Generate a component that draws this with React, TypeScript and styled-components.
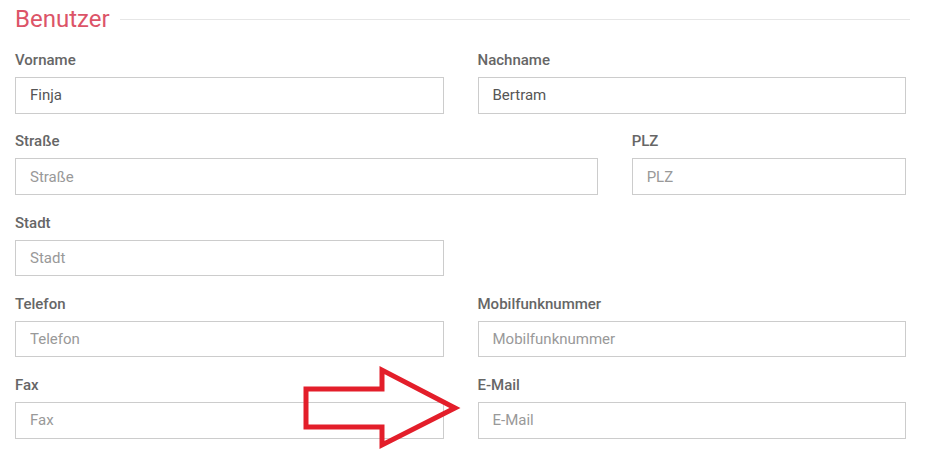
import React from "react";
import styled, { createGlobalStyle } from "styled-components";

const GlobalStyle = createGlobalStyle`
  html, body {
    margin: 0;
    padding: 0;
    background: #ffffff;
  }
  body {
    font-family: Roboto, "Liberation Sans", Arial, sans-serif;
  }
  * {
    box-sizing: border-box;
  }
`;

const Page = styled.div`
  position: relative;
  width: 927px;
  height: 463px;
  padding: 0 21px 0 15px;
  overflow: hidden;
`;

const TitleRow = styled.div`
  display: flex;
  align-items: center;
  gap: 10px;
  height: 38px;
  margin-bottom: 12px;
`;

const Title = styled.h2`
  margin: 0;
  font-weight: 400;
  font-size: 24px;
  line-height: 38px;
  color: #dc5468;
`;

const TitleLine = styled.div`
  flex: 1;
  height: 1px;
  background-color: #e6e6e6;
  margin-right: -4px;
`;

const FormGrid = styled.div`
  display: grid;
  grid-template-columns: repeat(12, 1fr);
  column-gap: 34px;
  row-gap: 17.75px;
`;

interface FieldProps {
  span: number;
}

const Field = styled.div<FieldProps>`
  grid-column: span ${(props) => props.span};
  display: flex;
  flex-direction: column;
`;

const Label = styled.label`
  font-weight: 500;
  font-size: 15px;
  line-height: 20px;
  color: #666666;
  margin-bottom: 7px;
`;

const Input = styled.input`
  height: 36.5px;
  width: 100%;
  padding: 0 14px;
  border: 1px solid #cccccc;
  border-radius: 0;
  background: #ffffff;
  font-family: inherit;
  font-size: 15px;
  color: #555555;
  outline: none;

  &::placeholder {
    color: #999999;
  }
`;

const Spacer = styled.div<FieldProps>`
  grid-column: span ${(props) => props.span};
`;

const ArrowOverlay = styled.svg`
  position: absolute;
  left: 0;
  top: 0;
  pointer-events: none;
`;

const fields = [
  { label: "Vorname", value: "Finja", span: 6 },
  { label: "Nachname", value: "Bertram", span: 6 },
  { label: "Straße", span: 8 },
  { label: "PLZ", span: 4 },
  { label: "Stadt", span: 6, gapAfter: 6 },
  { label: "Telefon", span: 6 },
  { label: "Mobilfunknummer", span: 6 },
  { label: "Fax", span: 6 },
  { label: "E-Mail", span: 6 },
];

const App: React.FC = () => {
  return (
    <Page>
      <GlobalStyle />
      <TitleRow>
        <Title>Benutzer</Title>
        <TitleLine />
      </TitleRow>

      <FormGrid>
        {fields.map((f) => (
          <React.Fragment key={f.label}>
            <Field span={f.span}>
              <Label>{f.label}</Label>
              <Input
                placeholder={f.label}
                defaultValue={f.value}
                readOnly
              />
            </Field>
            {f.gapAfter ? <Spacer span={f.gapAfter} /> : null}
          </React.Fragment>
        ))}
      </FormGrid>

      <ArrowOverlay width="927" height="463" viewBox="0 0 927 463">
        <polygon
          points="306,389 382,389 382,370 455,408 382,445 382,427 306,427"
          fill="none"
          stroke="#e31e2a"
          strokeWidth="5"
          strokeLinejoin="miter"
        />
      </ArrowOverlay>
    </Page>
  );
};

export default App;
